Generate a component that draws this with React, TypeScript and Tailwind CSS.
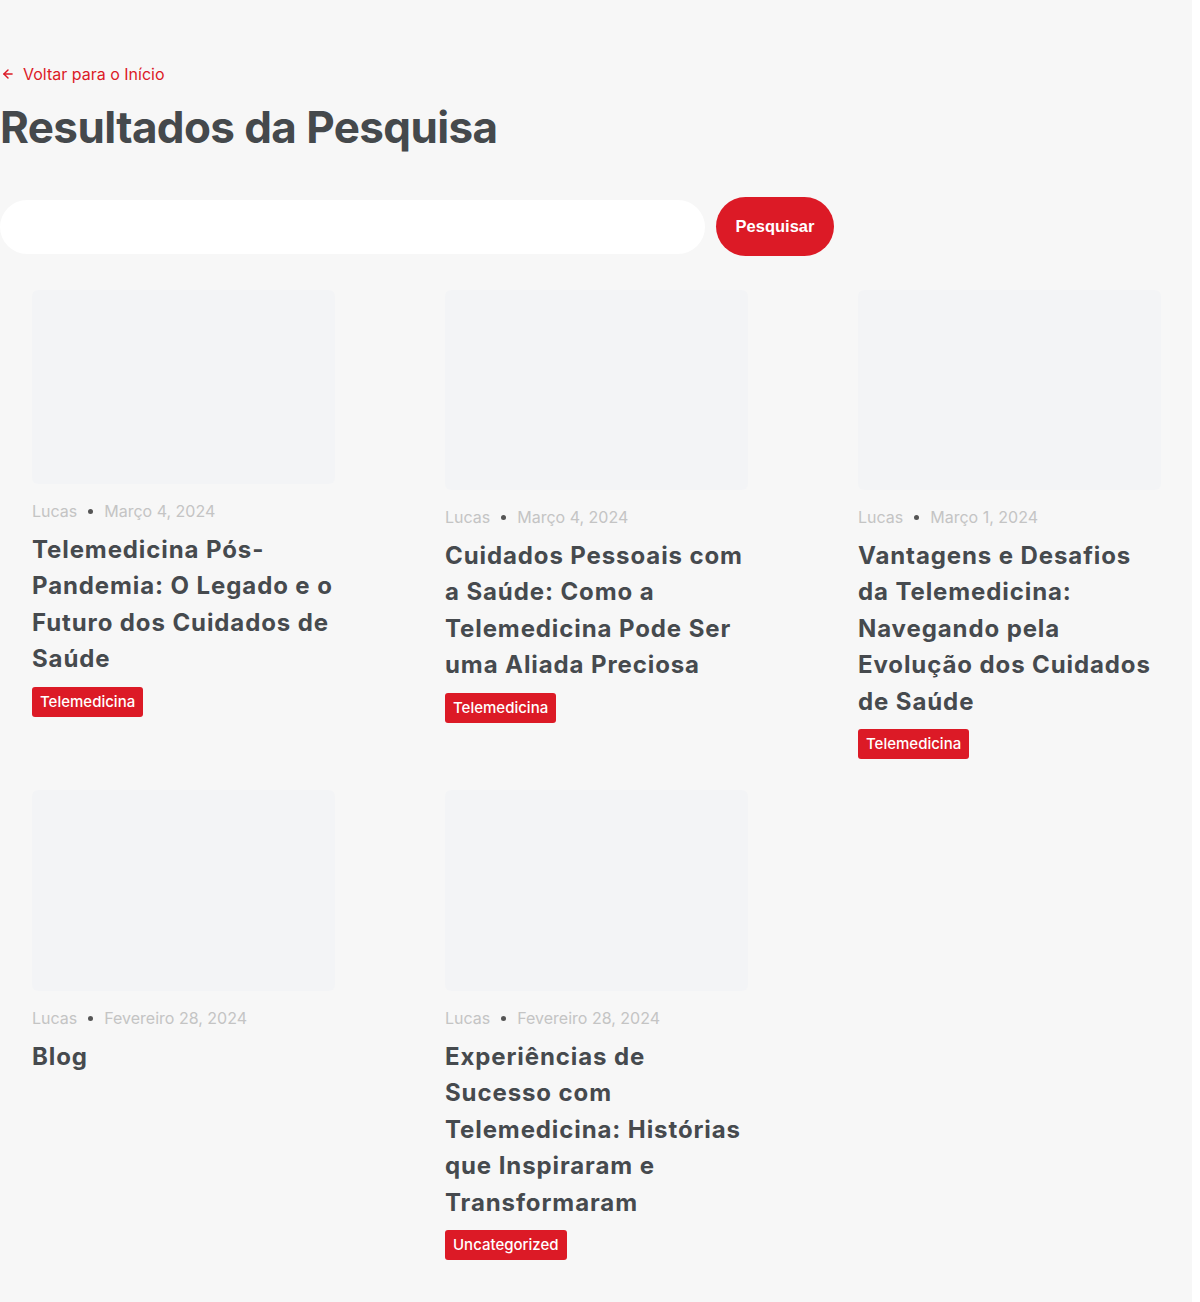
import { ArrowLeft } from 'lucide-react';

interface Post {
  author: string;
  date: string;
  title: string;
  tag: string;
  imageHeight: string;
}

const posts: Post[] = [
  {
    author: 'Lucas',
    date: 'Março 4, 2024',
    title: 'Telemedicina Pós-Pandemia: O Legado e o Futuro dos Cuidados de Saúde',
    tag: 'Telemedicina',
    imageHeight: 'h-[194px]',
  },
  {
    author: 'Lucas',
    date: 'Março 4, 2024',
    title: 'Cuidados Pessoais com a Saúde: Como a Telemedicina Pode Ser uma Aliada Preciosa',
    tag: 'Telemedicina',
    imageHeight: 'h-[200px]',
  },
  {
    author: 'Lucas',
    date: 'Março 1, 2024',
    title: 'Vantagens e Desafios da Telemedicina: Navegando pela Evolução dos Cuidados de Saúde',
    tag: 'Telemedicina',
    imageHeight: 'h-[200px]',
  },
  {
    author: 'Lucas',
    date: 'Fevereiro 28, 2024',
    title: 'Blog',
    tag: '',
    imageHeight: 'h-[201px]',
  },
  {
    author: 'Lucas',
    date: 'Fevereiro 28, 2024',
    title: 'Experiências de Sucesso com Telemedicina: Histórias que Inspiraram e Transformaram',
    tag: 'Uncategorized',
    imageHeight: 'h-[201px]',
  },
];

function PostCard({ post }: { post: Post }) {
  return (
    <article className="flex flex-col">
      <div className={`${post.imageHeight} w-full rounded-md bg-[#f3f4f6]`} />
      <div className="mt-[17px] flex items-center text-[16px] leading-[20px] text-[#c4c4c4]">
        <span>{post.author}</span>
        <span className="mx-[11px] inline-block h-[5px] w-[5px] rounded-full bg-[#555]" />
        <span>{post.date}</span>
      </div>
      <h3 className="mt-[11px] text-[24px] font-bold leading-[36.4px] tracking-[0.9px] text-[#464a4e]">
        {post.title}
      </h3>
      {post.tag && (
        <div className="mt-[9px]">
          <span className="inline-block rounded-[3px] bg-[#dc1a26] px-[8px] py-[5px] text-[15px] font-medium leading-[20px] text-white">
            {post.tag}
          </span>
        </div>
      )}
    </article>
  );
}

export default function App() {
  return (
    <div className="flex min-h-[1302px] w-full bg-white font-['Inter',sans-serif]">
      <main className="w-[1192px] bg-[#f7f7f7] pt-[64px] pb-[40px]">
        {/* voltar */}
        <a href="#" className="flex items-center gap-[8px] text-[16px] leading-[20px] text-[#dc1a26]">
          <ArrowLeft className="ml-[1px] h-[14px] w-[14px]" strokeWidth={2.5} />
          <span>Voltar para o Início</span>
        </a>

        <h1 className="mt-[15px] text-[44px] font-bold leading-[56px] tracking-[-0.6px] text-[#45494c]">
          Resultados da Pesquisa
        </h1>

        {/* busca */}
        <div className="mt-[42px] flex items-center gap-[11px]">
          <input
            type="text"
            className="h-[54px] w-[705px] rounded-full bg-white px-6 outline-none"
          />
          <button className="h-[59px] w-[118px] rounded-full bg-[#dc1a26] font-['Liberation_Sans',sans-serif] text-[16.5px] font-bold text-white">
            Pesquisar
          </button>
        </div>

        {/* resultados */}
        <div className="mt-[34px] grid grid-cols-[repeat(3,303px)] gap-x-[110px] gap-y-[31px] pl-[32px]">
          {posts.map((post, i) => (
            <PostCard key={i} post={post} />
          ))}
        </div>
      </main>
    </div>
  );
}
